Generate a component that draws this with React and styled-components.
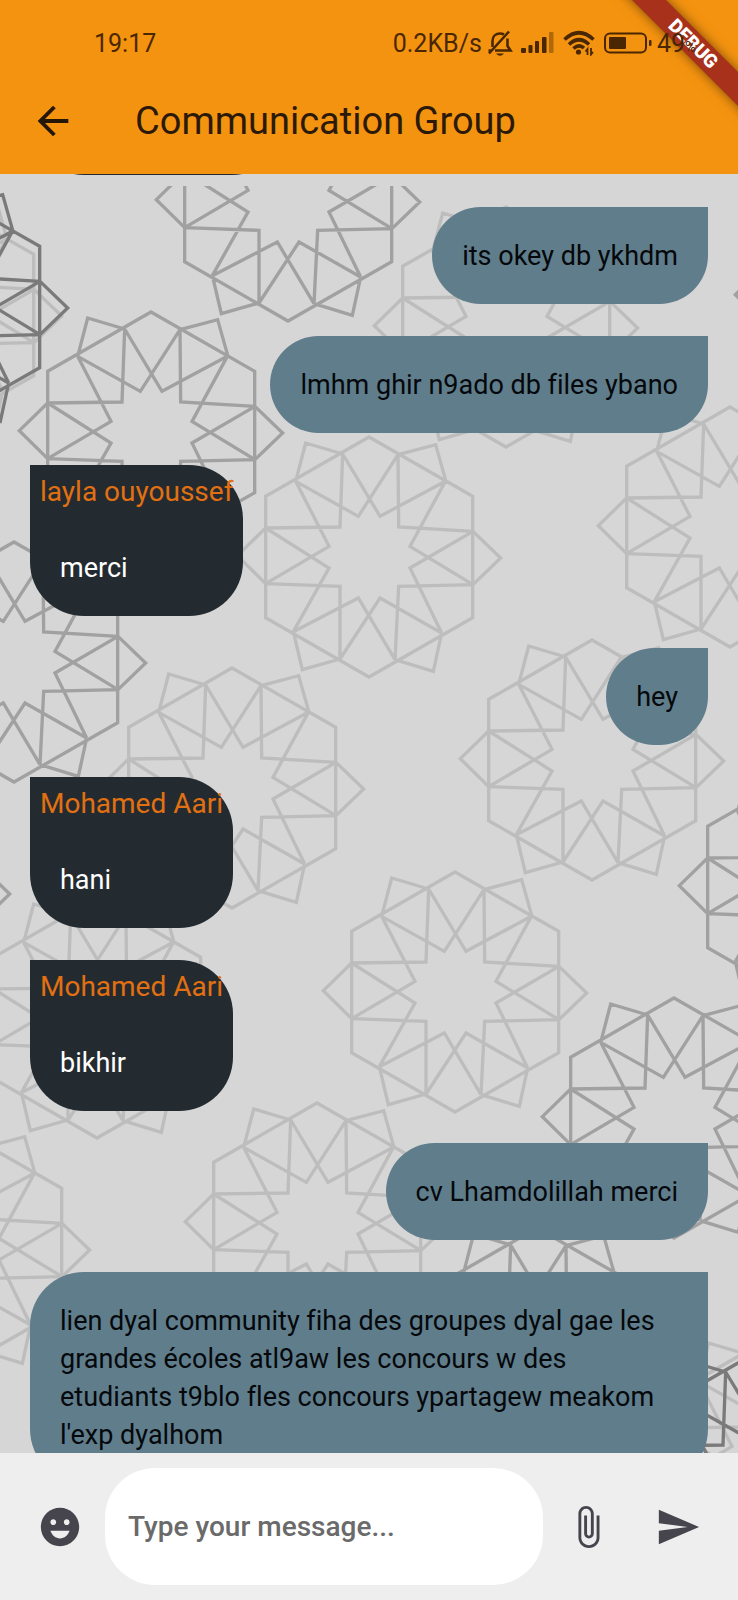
import React from "react";
import styled, { createGlobalStyle } from "styled-components";
import { MdArrowBack, MdEmojiEmotions, MdAttachFile, MdSend } from "react-icons/md";

const GlobalStyle = createGlobalStyle`
  *, *::before, *::after { box-sizing: border-box; }
  body {
    margin: 0;
    font-family: Roboto, "Liberation Sans", sans-serif;
    font-variant-ligatures: none;
  }
`;

const Screen = styled.div`
  position: relative;
  display: flex;
  flex-direction: column;
  height: 100vh;
  overflow: hidden;
  background: #d6d6d6;
`;

const Header = styled.header`
  position: relative;
  flex: none;
  overflow: hidden;
  background: #f4930f;
  color: #2b1a0a;
`;

const StatusBar = styled.div`
  position: relative;
  z-index: 2;
  display: flex;
  justify-content: space-between;
  align-items: center;
  height: 70px;
  padding: 16px 42px 0 94px;
  font-size: 25px;
  color: #4a2703;
`;

const StatusGroup = styled.div`
  display: flex;
  align-items: center;
`;

const Bell = styled.svg`
  width: 26px;
  height: 28px;
  margin-left: 5px;
`;

const Signal = styled.svg`
  width: 33px;
  height: 24px;
  margin-left: 8px;
`;

const Wifi = styled.svg`
  width: 32px;
  height: 26px;
  margin-left: 9px;
`;

const Battery = styled.svg`
  width: 48px;
  height: 24px;
  margin: 0 5px 0 9px;
`;

const Percent = styled.span`
  font-size: 15px;
`;

const AppBar = styled.div`
  display: flex;
  align-items: center;
  height: 104px;
  padding: 0 15px 2px;
`;

const IconButton = styled.button`
  display: flex;
  flex: none;
  align-items: center;
  justify-content: center;
  width: ${(p) => p.$width || 90}px;
  height: 90px;
  padding: 0;
  border: 0;
  background: none;
  color: ${(p) => p.$color || "#46454e"};
  cursor: pointer;
`;

const Title = styled.h1`
  margin: 0 0 0 44px;
  font-size: 38px;
  font-weight: 400;
  line-height: 48px;
`;

const DebugBanner = styled.div`
  position: absolute;
  z-index: 1;
  top: 32px;
  right: -75px;
  width: 240px;
  height: 24px;
  line-height: 24px;
  text-align: center;
  font-size: 19px;
  font-weight: 900;
  color: #fff;
  background: #a8311b;
  box-shadow: 0 0 12px rgba(0, 0, 0, 0.5);
  transform: rotate(45deg);
`;

const Chat = styled.main`
  position: relative;
  flex: 1;
  min-height: 0;
  overflow: hidden;
`;

const Pattern = styled.svg`
  position: absolute;
  top: 12px;
  left: 0;
  width: 100%;
  height: calc(100% - 12px);
  fill: none;
`;

const Messages = styled.ol`
  position: relative;
  display: flex;
  flex-direction: column;
  align-items: flex-start;
  gap: 32px;
  margin: -107px 0 0;
  padding: 0 30px;
  list-style: none;
`;

const Bubble = styled.li`
  flex: none;
  align-self: ${(p) => (p.$wide ? "stretch" : p.$mine ? "flex-end" : "flex-start")};
  border-radius: ${(p) => (p.$mine ? "54px 0 54px 54px" : "0 54px 54px 54px")};
  background: ${(p) => (p.$mine ? "#607d8b" : "#232b30")};
  color: ${(p) => (p.$mine ? "#05080b" : "#fff")};
`;

const ScrolledBubble = styled(Bubble)`
  width: 256px;
  height: 108px;
`;

const Sender = styled.div`
  padding: 10px;
  font-size: 28px;
  line-height: 34px;
  white-space: nowrap;
  color: #e27012;
`;

const Text = styled.p`
  margin: 0;
  padding: 30px 30px 29px;
  font-size: 27px;
  line-height: 38px;
  white-space: pre-line;
`;

const Composer = styled.form`
  display: flex;
  flex: none;
  align-items: center;
  padding: 15px;
  background: #eeeeee;
`;

const MessageInput = styled.input`
  flex: 1;
  min-width: 0;
  height: 117px;
  padding: 0 23px;
  border: 0;
  border-radius: 50px;
  outline: none;
  background: #fff;
  font-family: inherit;
  font-size: 28px;
  font-weight: 500;
  color: #222;
  &::placeholder { color: #6a6a6a; opacity: 1; }
`;

const rosette =
  "M0-360L311-182V182L0 360L-310 182V-182Z" +
  "M-79-309L-190-342L-220-227M87-307L200-337L231-227M-227 224L-200 338L-87 306M218 228L193 343L78 308" +
  "M312-77L395 3L312 83M-310-87L-395-4L-310 80" +
  "M-79-309L33-122L229-227M87-307L-32-122L-220-227" +
  "M-79-309L-87-90L-310-87M87-307L89-90L312-77" +
  "M-220-227L-120-32L-310 80M-310-87L-120 33L-227 224" +
  "M-310 80L-87 88V306M229-227L123-32L312 83" +
  "M312-77L123 33L218 228M312 83L89 88L78 308" +
  "M-227 224L-32 123L78 308M218 228L33 123L-87 306";

const tones = { light: "#bdbdbd", mid: "#a1a1a1", dark: "#7a7a7a" };

const rosettes = [
  [-70, 315, "light"], [-64, 307, "dark"],
  [288, 201, "mid"], [151, 432, "mid"], [867, 296, "mid"],
  [506, 327, "light"], [369, 557, "light"], [730, 527, "light"],
  [14, 662, "mid"], [232, 788, "light"], [592, 760, "light"],
  [-122, 893, "mid"], [97, 1018, "light"], [455, 992, "light"],
  [811, 887, "mid"], [674, 1118, "mid"], [-42, 1249, "light"],
  [317, 1223, "light"], [537, 1348, "mid"],
  [772, 1457, "light"], [752, 1475, "dark"],
];

const messages = [
  { text: "its okey db ykhdm" },
  { text: "lmhm ghir n9ado db files ybano" },
  { sender: "layla ouyoussef", text: "merci" },
  { text: "hey" },
  { sender: "Mohamed Aari", text: "hani" },
  { sender: "Mohamed Aari", text: "bikhir" },
  { text: "cv Lhamdolillah merci" },
  {
    wide: true,
    text:
      "lien dyal community fiha des groupes dyal gae les\ngrandes écoles atl9aw les concours w des\n" +
      "etudiants t9blo fles concours ypartagew meakom\nl'exp dyalhom",
  },
];

function StatusIcons() {
  return (
    <>
      <Bell viewBox="0 0 26 28" fill="none" stroke="currentColor" strokeWidth="2.6" aria-hidden="true">
        <path d="M5.500 18V12C5.500 7 9 4.500 13 4.500Q15 4.500 17 5.500M20.500 9.500V17L23.500 21.500H8" />
        <path d="M2 24.500L22 2.500M1.500 21.500H4.500" />
        <path d="M9 24.500H17Q13 29 9 24.500Z" fill="currentColor" stroke="none" />
      </Bell>
      <Signal viewBox="0 0 33 24" fill="currentColor" aria-hidden="true">
        <rect x="0" y="17" width="5" height="5" rx="1" />
        <rect x="7.500" y="14" width="4" height="8" rx="1" />
        <rect x="14" y="10" width="4" height="12" rx="1" />
        <rect x="21" y="6" width="4.500" height="16" rx="1" />
        <rect x="28" y="1" width="4.500" height="21" rx="1" opacity="0.4" />
      </Signal>
      <Wifi viewBox="0 0 32 26" fill="none" stroke="currentColor" strokeWidth="3.6" aria-hidden="true">
        <path d="M1.500 9.500Q16-4 30.500 9.500M6 14.500Q16 5 26 14.500M10.500 18.500Q16 13.500 21 18" />
        <circle cx="15.500" cy="22" r="2.600" fill="currentColor" stroke="none" />
        <path d="M24.500 25V19L22.500 21.500M28 18V24.500L30 22" strokeWidth="1.800" />
      </Wifi>
      <Battery viewBox="0 0 48 24" fill="none" aria-hidden="true">
        <rect x="1" y="2.500" width="41" height="19" rx="5" stroke="currentColor" strokeWidth="2" />
        <rect x="5" y="6" width="17" height="12" rx="1" fill="currentColor" />
        <rect x="45" y="9" width="2.500" height="6" rx="1" fill="currentColor" />
      </Battery>
    </>
  );
}

export default function App() {
  return (
    <Screen>
      <GlobalStyle />
      <Header>
        <StatusBar>
          <span>19:17</span>
          <StatusGroup>
            <span>0.2KB/s</span>
            <StatusIcons />
            <span>49<Percent>%</Percent></span>
          </StatusGroup>
        </StatusBar>
        <AppBar>
          <IconButton type="button" aria-label="Back" $width={76} $color="#241708">
            <MdArrowBack size={46} />
          </IconButton>
          <Title>Communication Group</Title>
        </AppBar>
        <DebugBanner>DEBUG</DebugBanner>
      </Header>

      <Chat>
        <Pattern viewBox="0 186 738 1267" preserveAspectRatio="xMidYMin slice" aria-hidden="true">
          {rosettes.map(([x, y, tone]) => (
            <path
              key={`${x},${y}`}
              d={rosette}
              transform={`translate(${x} ${y}) scale(0.33333)`}
              stroke={tones[tone]}
              strokeWidth="10"
            />
          ))}
        </Pattern>
        <Messages>
          <ScrolledBubble aria-hidden="true" />
          {messages.map((m, i) => (
            <Bubble key={i} $mine={!m.sender} $wide={m.wide}>
              {m.sender && <Sender>{m.sender}</Sender>}
              <Text>{m.text}</Text>
            </Bubble>
          ))}
        </Messages>
      </Chat>

      <Composer onSubmit={(e) => e.preventDefault()}>
        <IconButton type="button" aria-label="Emoji">
          <MdEmojiEmotions size={46} />
        </IconButton>
        <MessageInput type="text" aria-label="Message" placeholder="Type your message..." />
        <IconButton type="button" aria-label="Attach file">
          <MdAttachFile size={46} />
        </IconButton>
        <IconButton type="submit" aria-label="Send">
          <MdSend size={46} />
        </IconButton>
      </Composer>
    </Screen>
  );
}
